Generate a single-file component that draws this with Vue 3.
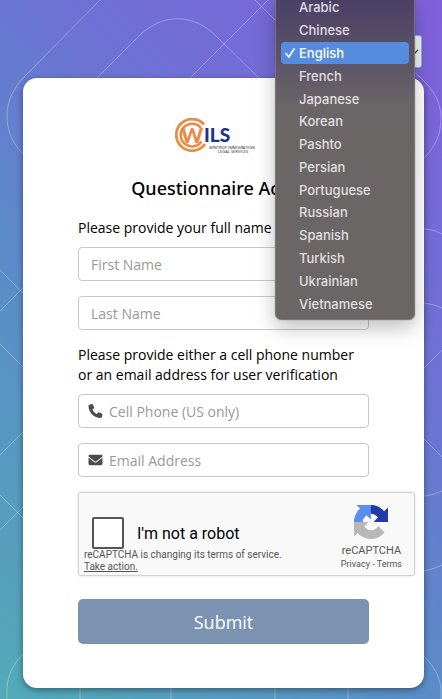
<script setup>
import { ref } from 'vue'

const languages = [
  'Arabic', 'Chinese', 'English', 'French', 'Japanese', 'Korean', 'Pashto',
  'Persian', 'Portuguese', 'Russian', 'Spanish', 'Turkish', 'Ukrainian', 'Vietnamese',
]
const language = ref('English')
const firstName = ref('')
const lastName = ref('')
const phone = ref('')
const email = ref('')
const human = ref(false)
</script>

<template>
  <div class="page">
    <svg class="pattern" viewBox="0 0 442 699" preserveAspectRatio="xMidYMin slice" aria-hidden="true">
      <path d="M100 0L26 75C13 88 7 101 7 116C7 132 13 144 24 155" />
      <path d="M97 78L139 36C162 13 193 13 216 36L259 78" />
      <path d="M190 78L268 0M255 0L331 76" />
      <path d="M400 60L421 78C435 91 441 104 441 118C441 135 435 147 424 158" />
      <path d="M0 270L24 294M0 311L24 287M0 344L24 368M24 431L0 455M0 495L24 519M24 506L0 530" />
      <path d="M24 653C13 664 7 676 7 690V699M80 688V699M171 688V699M275 688V699M348 688V699" />
      <path d="M424 229Q434 229 442 234M424 303Q434 304 442 308M424 368L442 350M424 439L442 457" />
      <path d="M424 496Q434 495 442 491M424 571Q434 569 442 565M424 656C435 667 441 679 441 692V699" />
    </svg>

    <header class="topbar">
      <div class="language">
        <select v-model="language" class="language-select" aria-label="Language">
          <option v-for="name in languages" :key="name">{{ name }}</option>
        </select>
        <svg class="chevron" viewBox="0 0 10 6" aria-hidden="true"><path d="M1 1l4 4 4-4" /></svg>
        <ul class="menu" role="listbox" aria-label="Languages">
          <li
            v-for="name in languages"
            :key="name"
            class="item"
            :class="{ chosen: name === language }"
            role="option"
            :aria-selected="name === language"
            @click="language = name"
          >
            <svg v-if="name === language" class="tick" viewBox="0 0 10 10" aria-hidden="true"><path d="M1 5.600l2.900 3.400L9 1" /></svg>
            <span v-else class="tick"></span>
            {{ name }}
          </li>
        </ul>
      </div>
    </header>

    <main class="card">
      <svg class="logo" viewBox="0 0 97 35" role="img" aria-label="WILS">
        <g fill="none" stroke="#e98b45">
          <path d="M29 6.500A15.800 15.800 0 1 0 30 26" stroke-width="2.800" />
          <path d="M26 10A11.400 11.400 0 1 0 26.500 23.500" stroke-width="2.600" />
        </g>
        <text x="6" y="25" class="mark orange">W</text>
        <text x="29" y="24" class="mark navy">ILS</text>
        <text x="34" y="31" class="tiny">WINTROP IMMIGRATION</text>
        <text x="43" y="35" class="tiny">LEGAL SERVICES</text>
      </svg>
      <h1>Questionnaire Access</h1>

      <form @submit.prevent>
        <fieldset>
          <legend>Please provide your full name</legend>
          <div class="field"><input v-model="firstName" type="text" placeholder="First Name" aria-label="First Name" /></div>
          <div class="field"><input v-model="lastName" type="text" placeholder="Last Name" aria-label="Last Name" /></div>
        </fieldset>
        <fieldset>
          <legend>Please provide either a cell phone number or an email address for user verification</legend>
          <label class="field with-icon">
            <svg viewBox="0 0 512 512" aria-hidden="true"><path d="M164.900 24.600c-7.700-18.600-28-28.500-47.400-23.200l-88 24C12.100 30.200 0 46 0 64c0 247.400 200.600 448 448 448 18 0 33.800-12.100 38.600-29.500l24-88c5.300-19.400-4.600-39.700-23.200-47.400l-96-40c-16.300-6.800-35.200-2.100-46.300 11.600L304.700 368C234.300 334.700 177.300 277.700 144 207.300l49.300-40.300c13.700-11.200 18.400-30 11.600-46.300z" /></svg>
            <input v-model="phone" type="tel" placeholder="Cell Phone (US only)" aria-label="Cell Phone (US only)" />
          </label>
          <label class="field with-icon">
            <svg viewBox="0 0 512 512" aria-hidden="true"><path d="M48 64C21.500 64 0 85.500 0 112c0 15.100 7.100 29.300 19.200 38.400l217.600 163.200c11.400 8.500 27 8.500 38.400 0l217.600-163.200c12.100-9.100 19.200-23.300 19.200-38.400 0-26.500-21.500-48-48-48zM0 176v208c0 35.300 28.700 64 64 64h384c35.300 0 64-28.700 64-64V176L294.400 339.200c-22.800 17.100-54 17.100-76.800 0z" /></svg>
            <input v-model="email" type="email" placeholder="Email Address" aria-label="Email Address" />
          </label>
        </fieldset>

        <div class="captcha">
          <div class="captcha-main">
            <label class="robot">
              <input v-model="human" type="checkbox" />
              <span>I'm not a robot</span>
            </label>
            <p>reCAPTCHA is changing its terms of service.<br /><a href="#">Take action.</a></p>
          </div>
          <div class="captcha-brand">
            <svg viewBox="0 0 64 64" aria-hidden="true">
              <path fill="#2439a8" d="M64 31.955l-.033-1.370V4.687l-7.160 7.160C50.948 4.674 42.033.093 32.050.093c-10.400 0-19.622 4.960-25.458 12.640l11.736 11.860a15.550 15.550 0 0 1 4.754-5.334c2.050-1.600 4.952-2.906 8.968-2.906.485 0 .860.057 1.135.163 4.976.393 9.288 3.140 11.828 7.124l-8.307 8.307L64 31.953" />
              <path fill="#5b8def" d="M31.862.094l-1.370.033H4.594l7.160 7.160C4.580 13.147 0 22.060 0 32.046c0 10.400 4.960 19.622 12.640 25.458L24.500 45.768a15.550 15.550 0 0 1-5.334-4.754c-1.600-2.050-2.906-4.952-2.906-8.968 0-.485.057-.860.163-1.135.393-4.976 3.140-9.288 7.124-11.828l8.307 8.307L31.862.095" />
              <path fill="#b7b7b8" d="M.001 32.045l.033 1.370v25.898l7.160-7.160c5.860 7.173 14.774 11.754 24.760 11.754 10.400 0 19.622-4.960 25.458-12.640l-11.736-11.860a15.550 15.550 0 0 1-4.754 5.334c-2.050 1.600-4.952 2.906-8.968 2.906-.485 0-.860-.057-1.135-.163-4.976-.393-9.288-3.140-11.828-7.124l8.307-8.307c-10.522.040-22.400.066-27.295-.005" />
            </svg>
            <strong>reCAPTCHA</strong>
            <small><a href="#">Privacy</a> - <a href="#">Terms</a></small>
          </div>
        </div>

        <button class="submit" type="submit">Submit</button>
      </form>
    </main>
  </div>
</template>

<style>
body {
  margin: 0;
}
</style>

<style scoped>
* {
  box-sizing: border-box;
}

.page {
  position: relative;
  min-height: 100vh;
  padding: 0 18px 11px 23px;
  overflow: hidden;
  background: linear-gradient(225deg, #8060dc 0%, #6c73d3 36%, #5b8bc8 60%, #52aab7 100%);
  font-family: "Open Sans", sans-serif;
  font-size: 14px;
  color: #000;
}

.pattern {
  position: absolute;
  inset: 0;
  width: 100%;
  height: 100%;
  fill: none;
  stroke: rgba(255, 255, 255, 0.3);
}

.topbar {
  position: relative;
  z-index: 2;
  display: flex;
  justify-content: flex-end;
  height: 78px;
  padding: 35px 2px 0 0;
}

.language {
  position: relative;
  width: 146px;
  height: 33px;
}

.language-select {
  width: 100%;
  height: 100%;
  padding: 0 12px;
  border: 1px solid #7fb4ec;
  border-radius: 3px;
  background: #f4f4f5;
  font: inherit;
  appearance: none;
}

.chevron {
  position: absolute;
  top: 14px;
  right: 3px;
  width: 9px;
  fill: none;
  stroke: #444;
  stroke-width: 1.5;
}

.menu {
  position: absolute;
  top: -40px;
  right: 7px;
  display: grid;
  grid-auto-rows: 1fr;
  width: 140px;
  height: 325px;
  margin: 0;
  padding: 0 5px 4px;
  border: 1px solid #7b7776;
  border-radius: 6px;
  background: linear-gradient(#4a3f66, #5c5468 20%, #6a6567 34%, #6a6665 50%);
  box-shadow: 0 0 1px rgba(0, 0, 0, 0.6), 0 8px 20px rgba(0, 0, 0, 0.25);
  list-style: none;
  font-family: Inter, sans-serif;
  font-size: 13px;
  font-weight: 500;
  color: #e0dee0;
}

.item {
  display: flex;
  align-items: center;
  gap: 4px;
  padding-left: 4px;
  border-radius: 4px;
}

.chosen {
  background: #558ce0;
  color: #fff;
}

.tick {
  width: 10px;
  height: 10px;
  fill: none;
  stroke: #fff;
  stroke-width: 1.6;
  stroke-linecap: round;
}

.card {
  position: relative;
  padding: 40px 55px 44px;
  border-radius: 14px;
  background: #fff;
  box-shadow: 0 2px 6px rgba(0, 0, 0, 0.4);
}

.logo {
  display: block;
  width: 97px;
  height: 35px;
  margin: 0 auto;
}

.mark {
  font: 900 19px Lato, sans-serif;
}

.orange {
  font-size: 21px;
  fill: #e98b45;
}

.navy {
  fill: #18358a;
}

.tiny {
  font: 4px "Open Sans", sans-serif;
  fill: #222;
}

h1 {
  margin: 21px 0 16px;
  font-family: "Noto Sans", sans-serif;
  font-size: 18px;
  line-height: 28px;
  font-weight: 500;
  text-align: center;
}

fieldset {
  min-width: 0;
  margin: 0 0 15px;
  padding: 0;
  border: 0;
}

legend {
  padding: 0 0 9px;
  line-height: 20px;
}

.field {
  display: flex;
  align-items: center;
  height: 34px;
  padding: 0 12px;
  border: 1px solid #c8c8c8;
  border-radius: 4px;
  background: #fff;
}

.field + .field {
  margin-top: 15px;
}

.with-icon {
  gap: 6px;
  padding: 0 9px;
}

.with-icon svg {
  flex: none;
  width: 15px;
  height: 14px;
  fill: #4d4d4d;
}

.field input {
  flex: 1;
  min-width: 0;
  padding: 0;
  border: 0;
  outline: 0;
  background: none;
  font: inherit;
}

.field input::placeholder {
  color: #999;
  opacity: 1;
}

.captcha {
  display: flex;
  justify-content: space-between;
  width: 337px;
  height: 84px;
  border: 1px solid #d3d3d3;
  border-radius: 3px;
  background: #f9f9f9;
  box-shadow: 0 0 3px rgba(0, 0, 0, 0.12);
  font-family: Roboto, sans-serif;
}

.captcha-main {
  padding: 24px 0 0 5px;
}

.robot {
  display: flex;
  align-items: center;
  gap: 13px;
  padding-left: 8px;
  font-size: 16px;
}

.robot input {
  width: 32px;
  height: 32px;
  margin: 0;
  border: 2px solid #555;
  border-radius: 2px;
  background: #fff;
  appearance: none;
}

.robot input:checked {
  background: #5b8def;
}

.captcha p {
  margin: 0;
  font-size: 10px;
  line-height: 12px;
  color: #555;
}

.captcha a {
  color: inherit;
}

.captcha-brand {
  display: flex;
  flex-direction: column;
  align-items: center;
  padding: 12px 12px 0 0;
  color: #555;
}

.captcha-brand svg {
  width: 34px;
  height: 34px;
}

.captcha-brand strong {
  margin-top: 5px;
  font-size: 11px;
  line-height: 14px;
  font-weight: 400;
}

.captcha-brand small {
  font-size: 9px;
  line-height: 12px;
}

.captcha-brand a {
  text-decoration: none;
}

.submit {
  display: block;
  width: 100%;
  height: 45px;
  margin-top: 23px;
  border: 0;
  border-radius: 5px;
  background: #7c92b1;
  font: 18px "Open Sans", sans-serif;
  color: #fff;
}
</style>
